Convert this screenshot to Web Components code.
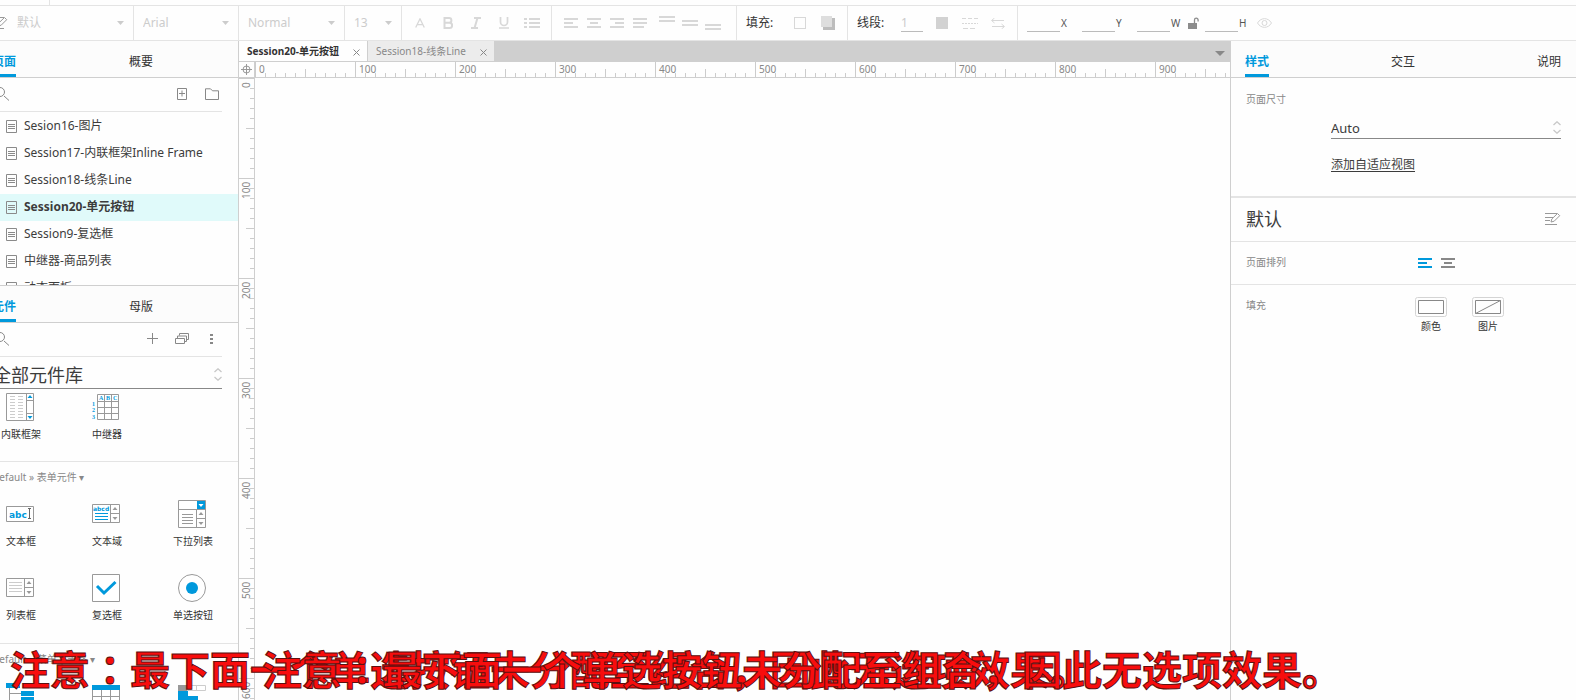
<!DOCTYPE html>
<html lang="zh-CN">
<head>
<meta charset="utf-8">
<meta name="viewport" content="width=device-width, initial-scale=1">
<title>Session20-单元按钮</title>
<style>
html,body{margin:0;height:100%}
body{overflow:hidden;background:#fefefe;color:#3c3c3c;font:12px/18px "Noto Sans","Noto Sans CJK SC",sans-serif;
--line:#e4e4e4;--line2:#cfcfcf;--blue:#0099dc;--muted:#888}
</style>
</head>
<body>
<proto-app></proto-app>
<script>
const BASE = `*{box-sizing:border-box}button,input,select{font:inherit;color:inherit;background:none;border:0;margin:0;padding:0;border-radius:0;outline:0}
button{cursor:pointer;display:grid;place-items:center}a{color:inherit;text-decoration:none}h2,h3,ul,p{margin:0;padding:0;font:inherit;list-style:none}`;
const define = (name, html, setup) => {
  const t = document.createElement('template');
  customElements.define(name, class extends HTMLElement {
    constructor() {
      super();
      t.innerHTML = `<style>${BASE}</style>` + (typeof html === 'function' ? html(this) : html);
      this.attachShadow({ mode: 'open' }).append(t.content.cloneNode(true));
    }
    connectedCallback() { if (setup) setup(this, this.shadowRoot); }
  });
};

/* name: [width, height, markup] */
const bars = (w, rows) => rows.map(([x, y, l]) => `<path d="M${x} ${y}h${l}" stroke="currentColor" stroke-width="2"/>`).join('');
const G = 'fill="#fff" stroke="#999"', BL = 'fill="#0099dc"';
const spin = (x, y, h) => `<path d="M${x} ${y}v${2*h}M${x} ${y+h}h9" stroke="#999"/><path d="M${x+2} ${y+h/2+1}l2.5-3l2.5 3zM${x+2} ${y+h*1.5-1}l2.5 3l2.5-3z" fill="#999"/>`;
const ICONS = {
  edit: [16, 14, '<g stroke="currentColor" fill="none"><path d="M0 1.5h12M0 5.5h8M0 8.5h5M0 12.5h12"/><path d="M6 10l.8-3L12.5 1.5l2.2 2.2L9.200 9.200z"/></g>'],
  caret: [7, 4, '<path d="M0 0h7L3.5 4z" fill="currentColor"/>'],
  caretBig: [10, 5, '<path d="M0 0h10L5 5z" fill="currentColor"/>'],
  fontA: [10, 10, '<path d="M.7 9.5L5 .8l4.300 8.700M2.200 6.700h5.600" fill="none" stroke="currentColor" stroke-width="1.3"/>'],
  bold: [10, 12, '<path d="M1.5 1h4.500a2.400 2.400 0 0 1 0 4.800H1.500zM1.500 5.800h5a2.600 2.600 0 0 1 0 5.200h-5z" fill="none" stroke="currentColor" stroke-width="2"/>'],
  italic: [10, 12, '<path d="M3 1h7M0 11h7M6.500 1L3.500 11" fill="none" stroke="currentColor" stroke-width="2"/>'],
  underline: [10, 12, '<path d="M1.500 0v5a3.500 3.500 0 0 0 7 0V0M0 11h10" fill="none" stroke="currentColor" stroke-width="1.7"/>'],
  bullets: [16, 12, bars(16, [[0,2,3],[5,2,11],[0,6,3],[5,6,11],[0,10,3],[5,10,11]])],
  left: [14, 10, bars(14, [[0,1,14],[0,5,9],[0,9,14]])],
  center: [14, 10, bars(14, [[0,1,14],[3,5,8],[0,9,14]])],
  right: [14, 10, bars(14, [[0,1,14],[5,5,9],[0,9,14]])],
  justify: [14, 10, bars(14, [[0,1,14],[0,5,14],[0,9,11]])],
  top: [16, 14, bars(16, [[0,1,16],[0,5,16]])],
  middle: [16, 14, bars(16, [[0,5,16],[0,9,16]])],
  bottom: [16, 14, bars(16, [[0,9,16],[0,13,16]])],
  fill: [12, 12, '<rect x=".5" y=".5" width="11" height="11" fill="none" stroke="currentColor"/>'],
  shadow: [14, 14, '<path d="M2 2h12v12H2z" fill="#bdbdbd"/><path d="M0 0h11v11H0z" fill="#dedede"/>'],
  solid: [12, 12, '<path d="M0 0h12v12H0z" fill="#d2d2d2"/>'],
  dashes: [16, 11, '<g stroke="currentColor"><path d="M0 .5h16" stroke-dasharray="4 2"/><path d="M0 5.500h16" stroke-dasharray="2 1"/><path d="M1 10.500h5M8 10.500h5"/></g>'],
  arrows: [14, 11, '<path d="M3.500 0L.5 2.500l3 2.500M1 2.500h12M10.500 6l3 2.500l-3 2.500M1 8.500h12" fill="none" stroke="currentColor"/>'],
  unlock: [11, 12, '<path d="M0 6h9v6H0z" fill="#8c8c8c"/><path d="M6.500 6V3a1.800 1.800 0 0 1 3.600 0v1.500" fill="none" stroke="#8c8c8c" stroke-width="1.3"/>'],
  eye: [15, 10, '<g fill="none" stroke="currentColor"><path d="M.5 5C4-.8 11-.8 14.500 5C11 10.800 4 10.800.5 5z"/><circle cx="7.500" cy="5" r="2.500"/></g>'],
  search: [14, 14, '<path d="M9 9l5 4.500" stroke="currentColor" fill="none"/><circle cx="5" cy="5" r="4.500" fill="none" stroke="currentColor"/>'],
  addPage: [10, 12, '<path d="M.5.5h9v11h-9zM2 5.500h6M5 2.500v6" fill="none" stroke="currentColor"/>'],
  folder: [14, 12, '<path d="M.5.800h5l2 2h6v8.700H.5z" fill="none" stroke="currentColor"/>'],
  plus: [11, 11, '<path d="M0 5.500h11M5.500 0v11" stroke="currentColor"/>'],
  stack: [15, 12, '<path d="M.5 5.500h9v5h-9zM2.500 5V3h9v5.500H10M4.500 2.500V.5h9v6H12" fill="none" stroke="currentColor"/>'],
  more: [4, 12, '<path d="M0 1h3v2H0zM0 5h3v2H0zM0 9h3v2H0z" fill="currentColor"/>'],
  updown: [8, 13, '<path d="M.5 4L4 .800L7.500 4M.5 9L4 12.200L7.500 9" fill="none" stroke="#c8c8c8" stroke-width="1.3"/>'],
  page: [11, 13, '<path d="M.5.5h10v12H.5zM2 4.500h7M2 6.500h7M2 8.500h7" fill="none" stroke="#8a8a8a"/>'],
  close: [7, 7, '<path d="M.5.5l6 6M6.500.5l-6 6" stroke="#888"/>'],
  origin: [11, 11, '<g fill="none" stroke="#999"><circle cx="5.500" cy="5.500" r="3.500"/><path d="M0 5.500h11M5.500 0v11"/></g>'],
  color: [32, 20, '<rect x=".5" y=".5" width="31" height="19" rx="2" fill="none" stroke="#d4d4d4"/><path d="M3.500 3.500h25v13h-25z" fill="none" stroke="#888"/>'],
  image: [32, 20, '<rect x=".5" y=".5" width="31" height="19" rx="2" fill="none" stroke="#d4d4d4"/><path d="M3.500 3.500h25v13h-25zM3.500 16.500l25-13" fill="none" stroke="#888"/>'],
  wFrame: [28, 28, `<path d="M.5.5h27v27H.5z" ${G}/><path d="M4 3.500h5M4 6.500h5M4 9.500h5M4 12.500h5M4 15.500h5M4 18.500h5M4 21.500h5M4 24.500h5M12 3.500h5M12 6.500h5M12 9.500h5M12 12.500h5M12 15.500h5M12 18.500h5M12 21.500h5M12 24.500h5" stroke="#ccc"/><path d="M20.500 0v28M20.500 7.500h7M20.500 20.500h7" stroke="#999"/><path d="M21.500 5l2.500-3l2.500 3zM21.500 23l2.500 3l2.500-3z" ${BL}/>`],
  wRepeat: [28, 28, `<path d="M5.500 1.500h21v25h-21zM12.500 1.500v25M19.500 1.500v25M5.500 8.500h21M5.500 14.500h21M5.500 20.500h21" ${G}/><g ${BL} font-family="Liberation Serif" font-weight="700" font-size="6"><text x="7" y="7">A</text><text x="14" y="7">B</text><text x="21" y="7">C</text><text x="0" y="13">1</text><text x="0" y="19">2</text><text x="0" y="26">3</text></g>`],
  wText: [28, 28, `<path d="M.5 6.500h27v15H.5z" ${G}/><text x="3" y="18" ${BL} font-family="DejaVu Sans" font-weight="700" font-size="9">abc</text><path d="M22 8.500h3M22 18.500h3M23.500 8.500v10" stroke="#666"/>`],
  wArea: [28, 28, `<path d="M.5 4.500h27v18H.5z" ${G}/><text x="1" y="11" ${BL} font-family="DejaVu Sans" font-weight="700" font-size="6">abcd</text><path d="M3 13.500h13M3 16.500h13M3 19.500h13" stroke="#0099dc"/>${spin(18.5, 4.5, 9)}`],
  wDrop: [28, 28, `<path d="M.5.5h27v27H.5zM.5 9.500h27" ${G}/><path d="M19 1h8v8h-8z" ${BL}/><path d="M20.500 4h5l-2.500 3z" fill="#fff"/><path d="M4 14.500h11M4 17.500h11M4 20.500h11M4 23.500h11" stroke="#999"/>${spin(18.5, 9.5, 9)}`],
  wList: [28, 28, `<path d="M.5 4.500h27v18H.5z" ${G}/><path d="M3 8.500h13M3 11.500h13M3 14.500h13M3 17.500h13" stroke="#ccc"/>${spin(18.5, 4.5, 9)}`],
  wCheck: [28, 28, `<path d="M.5.5h27v27H.5z" ${G}/><path d="M5 12l7 7L23.500 8" fill="none" stroke="#0099dc" stroke-width="3"/>`],
  wRadio: [28, 28, `<circle cx="14" cy="14" r="13.500" ${G}/><circle cx="14" cy="14" r="6" ${BL}/>`],
  wTree: [28, 28, `<path d="M3.500 6v22M3.500 11.500h12M3.500 18.500h12" stroke="#999"/><path d="M0 1h14v5H0zM15 9h13v5H15zM15 15h13v8H15z" ${BL}/>`],
  wTable: [28, 28, `<path d="M.5 3.500h27v24H.5zM9.500 3v25M18.500 3v25M0 14.500h28M0 21.500h28" ${G}/><path d="M0 3h28v5H0z" ${BL}/>`],
  wMenu: [28, 28, `<path d="M.5 3.500h27v5H.5zM18.500 3v5" fill="#fff" stroke="#ccc"/><path d="M0 3h9v6H0z" fill="#999"/><path d="M0 9h10v5h10v14H0z" ${BL}/>`]
};
define('ui-icon', el => {
  const [w, h, m] = ICONS[el.getAttribute('name')];
  return `<style>:host{display:block;flex:none}svg{display:block}</style><svg width="${w}" height="${h}" viewBox="0 0 ${w} ${h}" aria-hidden="true">${m}</svg>`;
});

define('ui-select', el => `<style>:host{display:block}label{display:grid;height:100%;align-items:center}
select{appearance:none;width:100%;height:100%;grid-area:1/1;padding-left:var(--pad,0)}ui-icon{grid-area:1/1;justify-self:end;margin-right:var(--end,0);pointer-events:none}</style>
<label><select aria-label="${el.getAttribute('label')}"><option>${el.getAttribute('value')}</option></select><ui-icon name="${el.getAttribute('icon') || 'caret'}"></ui-icon></label>`);

define('ui-field', el => `<style>:host{display:block}label{display:flex;align-items:center;gap:1px;height:18px;font-size:10px;color:#555}
input{width:33px;height:18px;border-bottom:1px solid #bbb}</style><label><input><span>${el.getAttribute('label')}</span></label>`);

const btn = n => `<button aria-label="${n}"><ui-icon name="${n}"></ui-icon></button>`;
define('tool-bar', `<style>:host{display:flex;height:35px;flex:none;border-bottom:1px solid var(--line);color:#ccc;overflow:hidden}
.s{flex:none;display:flex;align-items:center;border-right:1px solid var(--line)}
ui-select{--pad:9px;--end:9px;flex:1;height:100%;padding-bottom:1px}
.st{width:142px}.ff{width:105px}.fw{width:106px}.fs{width:57px}
.fmt{width:150px;padding-left:4px}.al{width:185px;padding-left:7px}.fill{width:111px;padding-left:9px}.ln{width:170px;padding-left:9px}
button{width:28px;height:28px;color:#d8d8d8}.al button{width:23px}.al button:nth-child(5){margin-left:4px}
.cap{color:#333;width:40px}.ln .cap{width:44px}.one{width:22px;height:18px;border-bottom:1px solid #bbb;margin-right:5px}
.geo{flex:1;border:0;padding-left:9px}.geo ui-field{width:55px}.geo ui-field:nth-child(3){width:51px}.geo ui-field:nth-child(5){width:45px}
.geo button:nth-of-type(1){width:17px;place-items:center start}</style>
<div class="s st"><ui-icon name="edit" style="color:#999"></ui-icon><ui-select label="样式" value="默认"></ui-select></div>
<div class="s ff"><ui-select label="字体" value="Arial"></ui-select></div>
<div class="s fw"><ui-select label="字重" value="Normal"></ui-select></div>
<div class="s fs"><ui-select label="字号" value="13"></ui-select></div>
<div class="s fmt">${['fontA','bold','italic','underline','bullets'].map(btn).join('')}</div>
<div class="s al">${['left','center','right','justify','top','middle','bottom'].map(btn).join('')}</div>
<div class="s fill"><span class="cap">填充:</span>${btn('fill')}${btn('shadow')}</div>
<div class="s ln"><label class="cap" for="lw">线段:</label><input class="one" id="lw" value="1">${btn('solid')}${btn('dashes')}${btn('arrows')}</div>
<div class="s geo"><ui-field label="X"></ui-field><ui-field label="Y"></ui-field><ui-field label="W"></ui-field>${btn('unlock')}<ui-field label="H"></ui-field>${btn('eye')}</div>`);

define('tab-strip', el => `<style>:host{display:flex;gap:var(--tab-gap,0);justify-content:var(--tab-justify,start);padding:var(--tab-pad,0);height:37px;flex:none;background:#fcfcfc;border-bottom:1px solid var(--line2);color:#333}
button{height:36px;padding-top:8px;border-bottom:3px solid transparent}
button:first-of-type{color:var(--blue);font-weight:700;border-color:var(--blue)}</style>
${el.getAttribute('tabs').split(',').map(t => `<button role="tab">${t}</button>`).join('')}`);

define('page-tree', `<style>:host{display:block;flex:1;min-height:0;overflow:hidden;padding-top:1px}
a{display:flex;align-items:center;gap:7px;height:27px;padding-left:14px}a[aria-current]{background:#e0fafa;font-weight:700}span{padding-bottom:1px}</style>
<ul>${['Sesion16-图片','Session17-内联框架Inline Frame','Session18-线条Line','Session20-单元按钮','Session9-复选框','中继器-商品列表','动态面板'].map((t, i) =>
`<li><a href="#"${i === 3 ? ' aria-current="page"' : ''}><ui-icon name="page"></ui-icon><span>${t}</span></a></li>`).join('')}</ul>`);

define('widget-group', el => `<style>:host{display:block;border-bottom:1px solid var(--line)}
h3{font-size:10px;line-height:16px;color:var(--muted);padding-top:7px;height:38px}
ul{display:grid;grid-template-columns:repeat(3,56px);column-gap:30px;row-gap:18px}
li{display:flex;flex-direction:column;align-items:center;gap:5px;height:56px;font-size:10px;line-height:16px;color:#333;white-space:nowrap}li span{padding-left:2px}</style>
${el.hasAttribute('heading') ? `<h3>${el.getAttribute('heading')}</h3>` : ''}
<ul>${el.getAttribute('items').split(',').map(s => { const [i, t] = s.split(':'); return `<li><ui-icon name="${i}"></ui-icon>${t ? `<span>${t}</span>` : ''}</li>`; }).join('')}</ul>`);

define('side-panel', `<style>:host{display:flex;flex-direction:column;width:247px;flex:none;min-height:0;border-right:1px solid var(--line2);overflow:hidden;--tab-gap:113px}
section{display:flex;flex-direction:column;overflow:hidden}.pages{flex:0 0 245px;border-bottom:1px solid var(--line2)}.lib{flex:1;min-height:0}
.find{display:flex;align-items:center;height:34px;flex:none;margin-right:16px;padding-bottom:2px;border-bottom:1px solid var(--line);color:#888}
.find input{flex:1;min-width:0}.find button{width:30px;height:30px}.find button:last-child{margin-right:-5px}
.find ui-icon.m{margin-left:3px}
.pick{height:32px;flex:none;margin-right:16px;padding-top:4px;border-bottom:1px solid #888;font-size:18px;line-height:26px;--pad:1px}
.groups{overflow:hidden}.first{padding:4px 0 12px}.mid{padding-bottom:13px}</style>
<section class="pages"><tab-strip tabs="页面,概要"></tab-strip>
<div class="find"><ui-icon class="m" name="search"></ui-icon><input type="search" aria-label="搜索页面">${btn('addPage')}${btn('folder')}</div><page-tree></page-tree></section>
<section class="lib"><tab-strip tabs="元件,母版"></tab-strip>
<div class="find"><ui-icon class="m" name="search"></ui-icon><input type="search" aria-label="搜索元件">${btn('plus')}${btn('stack')}${btn('more')}</div>
<ui-select class="pick" label="元件库" value="全部元件库" icon="updown"></ui-select>
<div class="groups"><widget-group class="first" items="wFrame:内联框架,wRepeat:中继器"></widget-group>
<widget-group class="mid" heading="Default » 表单元件 ▾" items="wText:文本框,wArea:文本域,wDrop:下拉列表,wList:列表框,wCheck:复选框,wRadio:单选按钮"></widget-group>
<widget-group heading="Default » 菜单 | 表格 ▾" items="wTree,wTable,wMenu"></widget-group></div></section>`);

define('scale-ruler', `<style>:host{display:flex;overflow:hidden;font-size:10px;line-height:14px;color:#888;min-width:0;min-height:0}
:host(:not([vertical])){border-bottom:1px solid var(--line2);background:linear-gradient(90deg,#ccc 1px,transparent 1px) 0 0/100px 100% repeat-x,linear-gradient(90deg,#ccc 1px,transparent 1px) 0 100%/50px 8px repeat-x,linear-gradient(90deg,#ccc 1px,transparent 1px) 0 100%/10px 4px repeat-x}
:host([vertical]){flex-direction:column;border-right:1px solid var(--line2);background:linear-gradient(#ccc 1px,transparent 1px) 0 0/100% 100px repeat-y,linear-gradient(#ccc 1px,transparent 1px) 100% 0/8px 50px repeat-y,linear-gradient(#ccc 1px,transparent 1px) 100% 0/4px 10px repeat-y}
span{flex:0 0 100px;padding-left:4px}:host([vertical]) span{writing-mode:vertical-rl;transform:rotate(180deg);text-align:end;padding:0 0 4px}</style>`,
(el, root) => new ResizeObserver(() => {
  const n = Math.ceil((el.hasAttribute('vertical') ? el.clientHeight : el.clientWidth) / 100);
  root.querySelectorAll('span').forEach(s => s.remove());
  for (let i = 0; i < n; i++) { const s = document.createElement('span'); s.textContent = i * 100; root.append(s); }
}).observe(el));

define('canvas-area', `<style>:host{flex:1;min-width:0;display:flex;flex-direction:column}
nav{display:flex;flex:none;height:21px;background:#cfcfcf;border-bottom:1px solid var(--line2);font-size:10px}
nav div{display:flex;align-items:center;justify-content:space-between;padding:0 7px 1px 8px;background:#ececec;color:#888;width:126px}
nav div.on{width:129px;background:#fefefe;color:#333;font-weight:700;border-right:1px solid var(--line2)}
nav div button{padding-top:3px}.dd{margin:4px 5px 0 auto;color:#888}
.work{flex:1;min-height:0;display:grid;grid-template:16px 1fr/16px 1fr}
.o{border-right:1px solid var(--line2);border-bottom:1px solid var(--line2);display:grid;place-items:center}</style>
<nav><div class="on"><a href="#">Session20-单元按钮</a>${btn('close')}</div><div><a href="#">Session18-线条Line</a>${btn('close')}</div><button class="dd" aria-label="标签"><ui-icon name="caretBig"></ui-icon></button></nav>
<div class="work"><div class="o"><ui-icon name="origin"></ui-icon></div><scale-ruler></scale-ruler><scale-ruler vertical></scale-ruler><main></main></div>`);

define('style-panel', `<style>:host{display:block;width:346px;flex:none;border-left:1px solid var(--line2);--tab-justify:space-between;--tab-pad:0 15px 0 14px}
section{display:flex;justify-content:space-between;padding:0 15px;border-bottom:1px solid var(--line)}
h3{font-size:10px;color:var(--muted)}.size{height:120px;border-bottom-width:2px;padding-top:12px}
.v{width:230px;padding-top:27px}.v ui-select{height:22px;border-bottom:1px solid #888;font-size:13px}.v a{display:inline-block;margin-top:17px;text-decoration:underline;text-underline-offset:2px}
.name{height:44px;align-items:center;padding-bottom:2px}h2{font-size:18px;line-height:26px}.name button{color:#999}
.arr{height:43px;align-items:center}.arr h3{padding-bottom:3px}.arr div,.fill div{width:146px;display:flex}.arr div{gap:9px;padding-left:3px;color:#888}.arr button:first-child{color:var(--blue)}
.fill{border:0;padding-top:11px}.fill div{gap:25px;padding-top:1px}.fill button{font-size:10px;line-height:16px;color:#333;gap:1px}</style>
<tab-strip tabs="样式,交互,说明"></tab-strip>
<section class="size"><h3>页面尺寸</h3><div class="v"><ui-select label="页面尺寸" value="Auto" icon="updown"></ui-select><a href="#">添加自适应视图</a></div></section>
<section class="name"><h2>默认</h2>${btn('edit')}</section>
<section class="arr"><h3>页面排列</h3><div>${btn('left')}${btn('center')}</div></section>
<section class="fill"><h3>填充</h3><div><button><ui-icon name="color"></ui-icon>颜色</button><button><ui-icon name="image"></ui-icon>图片</button></div></section>`);

define('caption-line', `<style>:host{position:absolute;bottom:2px;white-space:nowrap;font:700 40px/60px "Noto Sans CJK SC",sans-serif;color:#f80d0d;-webkit-text-stroke:1px #5c1010}
span{font-family:"Noto Sans CJK TC",sans-serif}</style><p>注意<span lang="zh-TW">：</span>最下面一个单选按钮未分配至组合，因此无选项效果。</p>`);

define('proto-app', `<style>:host{display:flex;flex-direction:column;height:100vh;margin-left:-8px;position:relative;overflow:hidden}
.menu{height:6px;flex:none;border-bottom:1px solid var(--line)}.menu i{display:block;width:58px;height:5px;border-right:1px solid var(--line)}
.body{flex:1;min-height:0;display:flex}</style>
<div class="menu"><i></i></div><tool-bar></tool-bar>
<div class="body"><side-panel></side-panel><canvas-area></canvas-area><style-panel></style-panel></div>
<caption-line style="left:18px"></caption-line><caption-line style="left:270px"></caption-line>`);
</script>
</body>
</html>
